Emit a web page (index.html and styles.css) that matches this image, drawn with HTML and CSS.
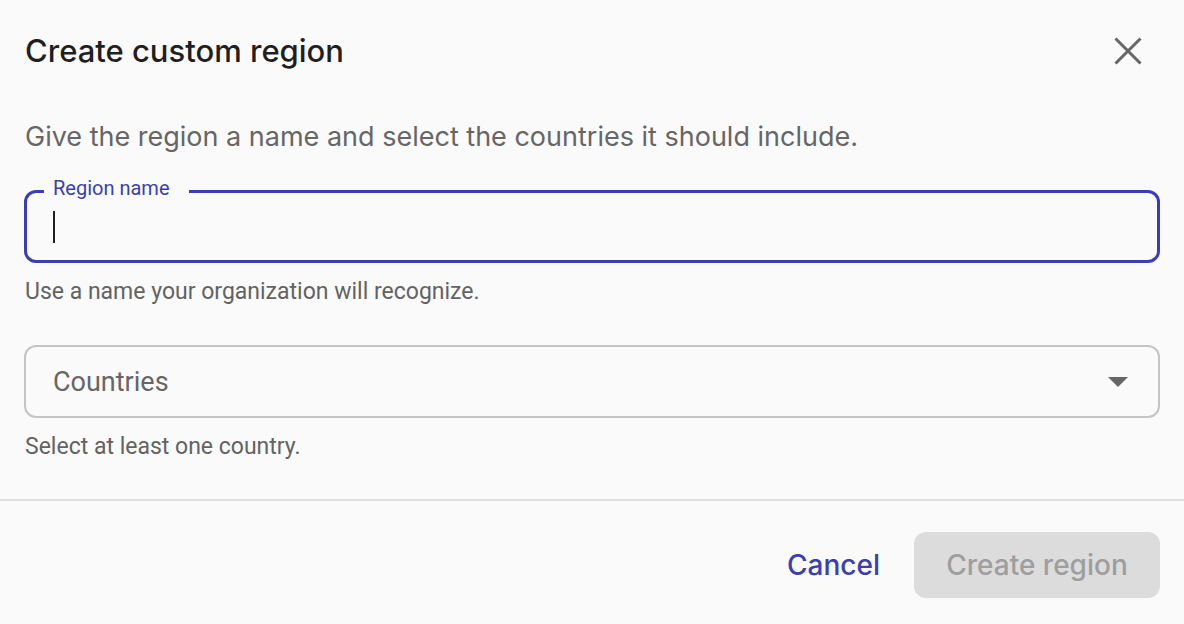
FILE: index.html
```html
<!DOCTYPE html>
<html lang="en">
<head>
    <meta charset="UTF-8">
    <meta name="viewport" content="width=device-width, initial-scale=1.0">
    <title>Create custom region</title>
    <link rel="stylesheet" href="styles.css">
</head>
<body>
    <div class="dialog">
        <div class="dialog-header">
            <h1 class="dialog-title">Create custom region</h1>
            <button class="close-btn" aria-label="Close">
                <svg width="28" height="28" viewBox="0 0 28 28">
                    <line x1="1.5" y1="1.5" x2="26.5" y2="26.5"/>
                    <line x1="26.5" y1="1.5" x2="1.5" y2="26.5"/>
                </svg>
            </button>
        </div>

        <p class="dialog-desc">Give the region a name and select the countries it should include.</p>

        <div class="field field-focused">
            <span class="field-label">Region name</span>
            <span class="caret"></span>
        </div>
        <p class="helper">Use a name your organization will recognize.</p>

        <div class="field field-select">
            <span class="placeholder">Countries</span>
            <span class="select-arrow"></span>
        </div>
        <p class="helper">Select at least one country.</p>
    </div>

    <div class="dialog-footer">
        <button class="btn btn-text">Cancel</button>
        <button class="btn btn-primary" disabled>Create region</button>
    </div>
</body>
</html>
```

FILE: styles.css
```css
body {
    margin: 0;
    background: #fafafa;
    font-family: Inter, "Noto Sans", sans-serif;
}
.dialog {
    padding: 0 24px;
}
.dialog-header {
    display: flex;
    justify-content: space-between;
    align-items: center;
    height: 38px;
    padding-top: 32px;
}
.dialog-title {
    margin: 0;
    font-size: 31px;
    line-height: 38px;
    font-weight: 500;
    color: #1f1f1f;
    padding-left: 1px;
}
.close-btn {
    width: 38px;
    height: 38px;
    margin-right: 13px;
    padding: 0;
    border: none;
    background: none;
    display: flex;
    align-items: center;
    justify-content: center;
}
.close-btn line {
    stroke: #666;
    stroke-width: 3;
}
.dialog-desc {
    margin: 50px 0 0;
    padding-left: 1px;
    font-size: 27px;
    line-height: 34px;
    color: #666;
}
.field {
    position: relative;
    box-sizing: border-box;
    height: 73px;
    border-radius: 12px;
    display: flex;
    align-items: center;
}
.field-focused {
    margin-top: 36px;
    border: 3px solid #3b3eb3;
    padding-left: 26px;
}
.field-label {
    position: absolute;
    top: -15px;
    left: 17px;
    padding: 0 19px 0 9px;
    background: #fafafa;
    font-family: Roboto, sans-serif;
    font-size: 20px;
    line-height: 20px;
    color: #3b3eb3;
}
.caret {
    width: 2px;
    height: 32px;
    background: #1f1f1f;
}
.field-select {
    margin-top: 39px;
    border: 2px solid #c4c4c4;
    padding: 0 30px 0 27px;
    justify-content: space-between;
}
.placeholder {
    font-family: Roboto, sans-serif;
    font-size: 27px;
    color: #666;
}
.select-arrow {
    width: 0;
    height: 0;
    border-left: 10px solid transparent;
    border-right: 10px solid transparent;
    border-top: 10px solid #666;
}
.helper {
    margin: 15px 0 0;
    padding-left: 1px;
    font-family: Roboto, sans-serif;
    font-size: 23px;
    line-height: 28px;
    color: #636363;
}
.dialog-footer {
    margin-top: 38px;
    border-top: 2px solid #dedede;
    padding: 31px 24px 0;
    display: flex;
    justify-content: flex-end;
    align-items: center;
    gap: 17px;
}
.btn {
    font-family: Inter, sans-serif;
    font-size: 28px;
    font-weight: 500;
    border: none;
    background: none;
    height: 66px;
    border-radius: 12px;
}
.btn-text {
    padding: 0 17px;
    color: #3b3eb3;
}
.btn-primary {
    width: 246px;
    padding: 0;
    background: #dcdcdc;
    color: #9e9e9e;
}
```
